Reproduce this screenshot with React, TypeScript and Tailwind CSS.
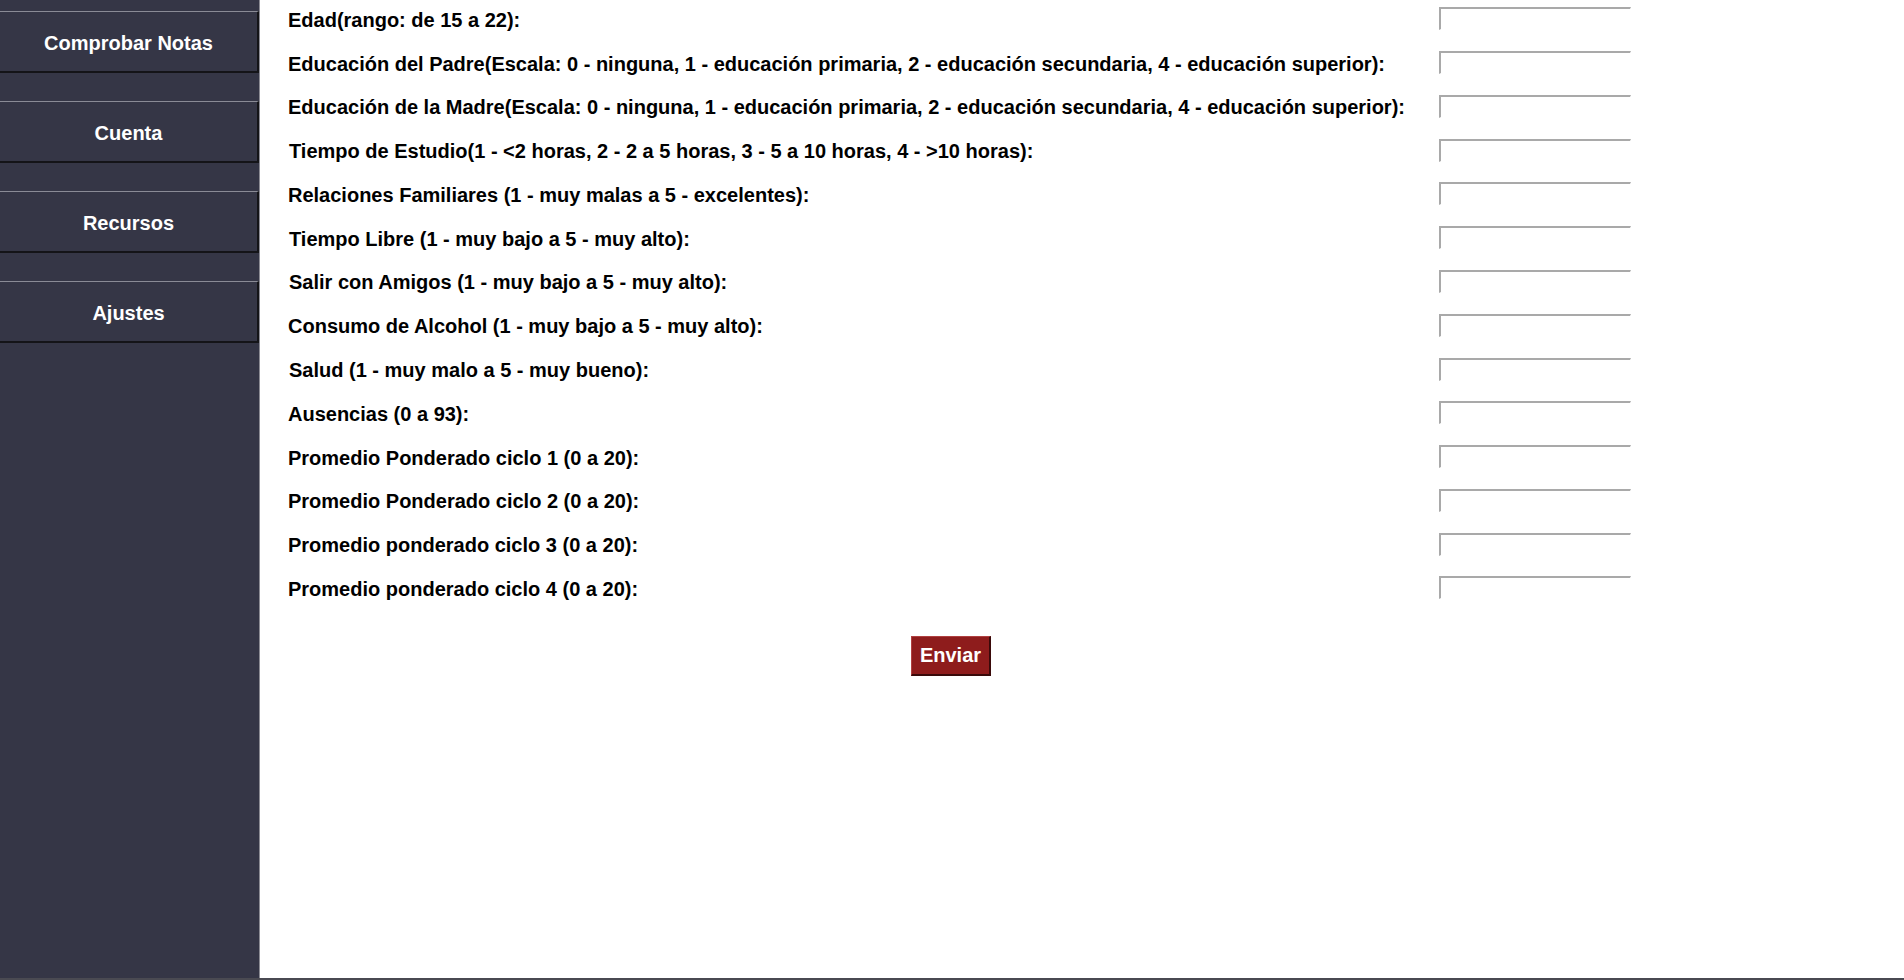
import { useState } from 'react';

const navItems = ['Comprobar Notas', 'Cuenta', 'Recursos', 'Ajustes'];

const fields: { id: string; label: string; shift?: boolean }[] = [
  { id: 'edad', label: 'Edad(rango: de 15 a 22):' },
  { id: 'fedu', label: 'Educación del Padre(Escala: 0 - ninguna, 1 - educación primaria, 2 - educación secundaria, 4 - educación superior):' },
  { id: 'medu', label: 'Educación de la Madre(Escala: 0 - ninguna, 1 - educación primaria, 2 - educación secundaria, 4 - educación superior):' },
  { id: 'studytime', label: 'Tiempo de Estudio(1 - <2 horas, 2 - 2 a 5 horas, 3 - 5 a 10 horas, 4 - >10 horas):', shift: true },
  { id: 'famrel', label: 'Relaciones Familiares (1 - muy malas a 5 - excelentes):' },
  { id: 'freetime', label: 'Tiempo Libre (1 - muy bajo a 5 - muy alto):', shift: true },
  { id: 'goout', label: 'Salir con Amigos (1 - muy bajo a 5 - muy alto):', shift: true },
  { id: 'alc', label: 'Consumo de Alcohol (1 - muy bajo a 5 - muy alto):' },
  { id: 'health', label: 'Salud (1 - muy malo a 5 - muy bueno):', shift: true },
  { id: 'absences', label: 'Ausencias (0 a 93):' },
  { id: 'g1', label: 'Promedio Ponderado ciclo 1 (0 a 20):' },
  { id: 'g2', label: 'Promedio Ponderado ciclo 2 (0 a 20):' },
  { id: 'g3', label: 'Promedio ponderado ciclo 3 (0 a 20):' },
  { id: 'g4', label: 'Promedio ponderado ciclo 4 (0 a 20):' },
];

export default function App() {
  const [values, setValues] = useState<Record<string, string>>({});

  return (
    <div className="flex h-[980px] w-[1904px] overflow-hidden border-b-2 border-[#4a4a52] bg-white font-['Liberation_Sans',Arial,sans-serif]">
      <aside className="flex w-[260px] shrink-0 flex-col gap-[28px] border-r border-[#8c8c94] bg-[#353646] pt-[11px]">
        {navItems.map((item) => (
          <button
            key={item}
            type="button"
            className="flex h-[62px] w-[259px] items-center justify-center border-t border-r-2 border-b-2 border-t-[#8a8b96] border-r-[#141418] border-b-[#141418] bg-[#353646] pt-[2px] text-[20px] font-bold text-white"
          >
            {item}
          </button>
        ))}
      </aside>

      <main className="flex-1 pl-[28px]">
        <form className="-mt-[2px] w-[1350px]" onSubmit={(e) => e.preventDefault()}>
          {fields.map((field) => (
            <div key={field.id} className="flex h-[43.77px] items-center">
              <label htmlFor={field.id} className={`w-[1151px] text-[20px] font-bold text-black ${field.shift ? 'pl-[1px]' : ''}`}>
                {field.label}
              </label>
              <input
                id={field.id}
                value={values[field.id] || ''}
                onChange={(e) => setValues((prev) => ({ ...prev, [field.id]: e.target.value }))}
                className="-mt-[2px] h-[23px] w-[192px] border-t-2 border-l-2 border-r border-b border-t-[#a9a9a9] border-l-[#a9a9a9] border-r-white border-b-white px-1 text-[14px] outline-none"
              />
            </div>
          ))}

          <div className="mt-[25px] flex w-[1326px] justify-center">
            <button
              type="submit"
              className="h-[40px] w-[80px] border-t border-l border-r-2 border-b-2 border-t-[#b04040] border-l-[#b04040] border-r-[#3a0a0a] border-b-[#3a0a0a] bg-[#8e1c1c] text-[20px] font-bold text-white"
            >
              Enviar
            </button>
          </div>
        </form>
      </main>
    </div>
  );
}
